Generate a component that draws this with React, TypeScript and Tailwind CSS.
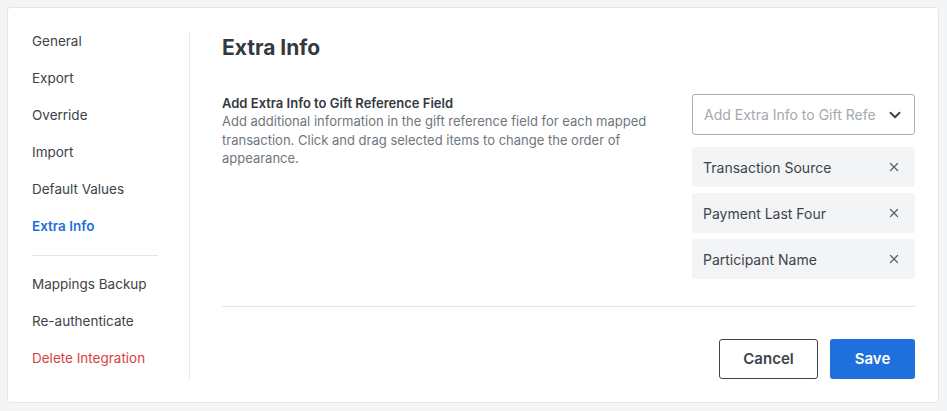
import { X, ChevronDown } from "lucide-react";

const navTop = ["General", "Export", "Override", "Import", "Default Values"];
const navBottom = ["Mappings Backup", "Re-authenticate"];
const selected = ["Transaction Source", "Payment Last Four", "Participant Name"];

export default function App() {
  return (
    <div
      className="min-h-screen w-[947px] h-[411px] bg-[#f4f5f6] p-[7px] pb-[8px]"
      style={{ fontFamily: "Inter, 'Liberation Sans', sans-serif" }}
    >
      <div className="h-[396px] w-[932px] bg-white border border-[#e4e6e8] rounded-[3px] flex pt-[24px]">
        {/* sidebar */}
        <aside className="w-[182px] shrink-0 pl-[24px] pr-[31px] h-[347px] border-r border-[#e6e8ea]">
          <nav className="flex flex-col text-[13.5px] text-[#3d434a] -mt-[1px]">
            {navTop.map((n) => (
              <a key={n} className="h-[37px]">
                {n}
              </a>
            ))}
            <a className="h-[39px] font-semibold text-[#1f6fd8]">Extra Info</a>
            <div className="border-t border-[#e3e5e8] mb-[18px]" />
            {navBottom.map((n) => (
              <a key={n} className="h-[37px]">
                {n}
              </a>
            ))}
            <a className="h-[37px] text-[#d8423a]">Delete Integration</a>
          </nav>
        </aside>

        {/* main */}
        <main className="flex-1 pl-[32px] pr-[23px] flex flex-col">
          <h2 className="text-[21px] font-bold text-[#33393f] leading-[32px] mt-0">Extra Info</h2>
          <div className="flex justify-between mt-[30px]">
            <div className="w-[440px]">
              <div className="text-[13px] font-semibold text-[#33393f] leading-[18px]">
                Add Extra Info to Gift Reference Field
              </div>
              <p className="text-[13px] text-[#6f767e] leading-[18.5px]">
                Add additional information in the gift reference field for each mapped transaction. Click and drag
                selected items to change the order of appearance.
              </p>
            </div>
            <div className="w-[223px] flex flex-col gap-[6px] mt-0">
              <div className="h-[41px] border border-[#a7b0b9] rounded-[3px] flex items-center pl-[11px] pr-[10px] mb-[6px]">
                <span className="flex-1 text-[14px] text-[#a3a9b0] whitespace-nowrap overflow-hidden">
                  Add Extra Info to Gift Refe
                </span>
                <ChevronDown className="w-[18px] h-[18px] text-[#3d434a] ml-[10px]" strokeWidth={2.5} />
              </div>
              {selected.map((s) => (
                <div
                  key={s}
                  className="h-[40px] bg-[#f3f4f5] rounded-[3px] flex items-center justify-between pl-[11px] pr-[14px] text-[14px] text-[#3d434a]"
                >
                  <span>{s}</span>
                  <X className="w-[14px] h-[14px] text-[#5b6168]" strokeWidth={2.25} />
                </div>
              ))}
            </div>
          </div>
          <div className="border-t border-[#e3e5e8] mt-[27px]" />
          <div className="flex justify-end gap-[12px] mt-[32px]">
            <button className="w-[99px] h-[40px] border border-[#3d434a] rounded-[3px] text-[15px] font-semibold text-[#3d434a] bg-white">
              Cancel
            </button>
            <button className="w-[85px] h-[40px] rounded-[3px] text-[15px] font-semibold text-white bg-[#1f70dc]">
              Save
            </button>
          </div>
        </main>
      </div>
    </div>
  );
}
